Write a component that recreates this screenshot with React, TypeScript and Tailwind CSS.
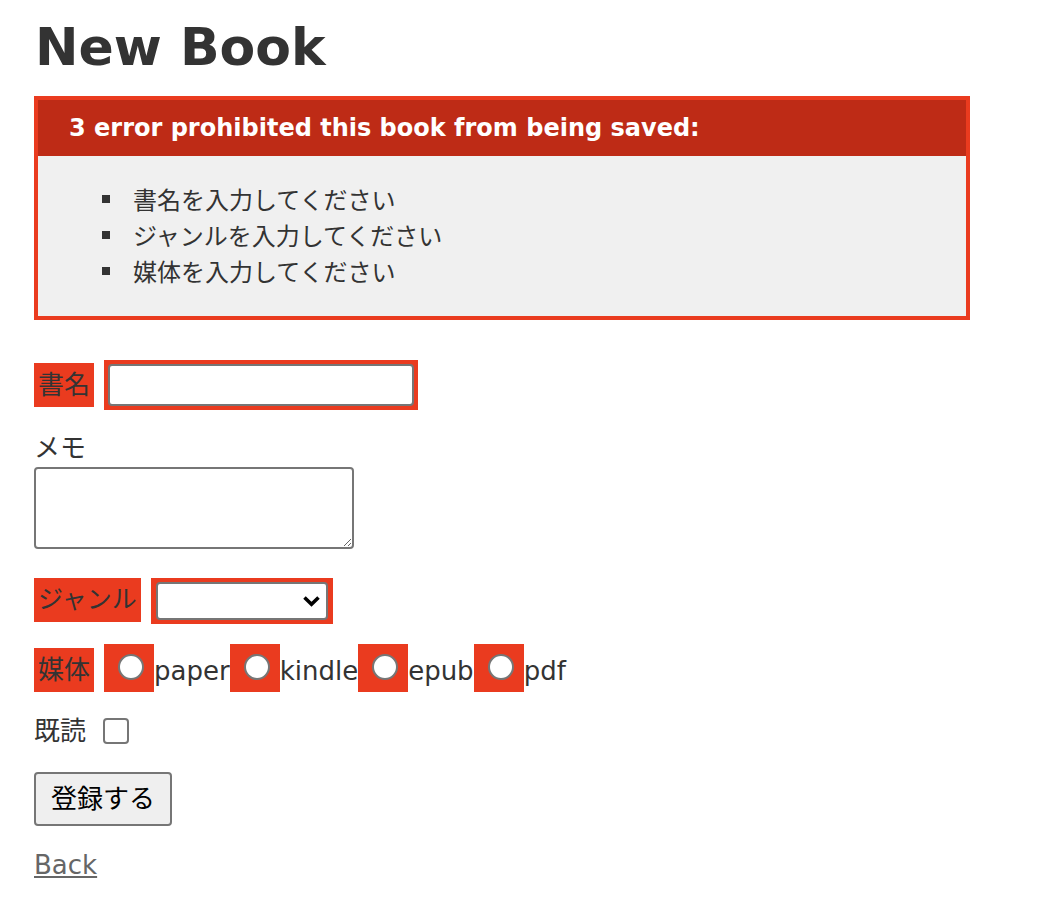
import React from "react";

const media = ["paper", "kindle", "epub", "pdf"];
const errors = [
  "書名を入力してください",
  "ジャンルを入力してください",
  "媒体を入力してください",
];

function ErrorLabel({ children, size = "text-[26px]" }: { children: React.ReactNode; size?: string }) {
  return (
    <span className={`bg-[#ea3b1f] px-[4px] py-[4px] leading-[36px] ${size}`}>
      {children}
    </span>
  );
}

export default function App() {
  return (
    <div className="min-h-screen bg-white px-[34px] pt-[21px] text-[#333] font-['DejaVu_Sans','Noto_Sans_CJK_JP',sans-serif]">
      <h1 className="ml-[1px] text-[52px] leading-[52px] font-bold">New Book</h1>

      {/* Error explanation */}
      <div className="mt-[23px] w-[936px] border-4 border-[#ea3b1f] bg-[#f0f0f0]">
        <h2 className="flex h-[56px] items-center bg-[#be2b16] pl-[31px] text-[24px] font-bold text-white">
          3 error prohibited this book from being saved:
        </h2>
        <ul className="pt-[25px] pb-[27px] pl-[64px] font-['Noto_Sans_CJK_JP',sans-serif] text-[24px] leading-[36px]">
          {errors.map((e) => (
            <li key={e} className="flex items-center">
              <span className="mr-[23px] h-[8px] w-[8px] bg-[#333]" />
              {e}
            </li>
          ))}
        </ul>
      </div>

      {/* Form */}
      <form className="mt-[40px]" onSubmit={(e) => e.preventDefault()}>
        <div className="flex items-center gap-[10px]">
          <ErrorLabel>書名</ErrorLabel>
          <div className="bg-[#ea3b1f] p-[4px]">
            <input
              type="text"
              className="block h-[42px] w-[306px] rounded-[4px] border-2 border-[#767676] bg-white"
            />
          </div>
        </div>

        <div className="mt-[20px] text-[26px] leading-[36px]">メモ</div>
        <textarea className="mt-[1px] block h-[82px] w-[320px] rounded-[4px] border-2 border-[#767676] bg-white" />

        <div className="mt-[29px] flex items-start gap-[10px]">
          <ErrorLabel size="text-[25px]">ジャンル</ErrorLabel>
          <div className="bg-[#ea3b1f] py-[4px] pl-[5px] pr-[5px]">
            <div className="relative">
              <select className="block h-[38px] w-[172px] appearance-none rounded-[4px] border-2 border-[#767676] bg-white">
                <option value=""></option>
              </select>
              <svg
                className="pointer-events-none absolute right-[7px] top-[13px]"
                width="19"
                height="12"
                viewBox="0 0 19 12"
              >
                <path d="M2.5 2.5 L9.5 9.2 L16.5 2.5" fill="none" stroke="#000" strokeWidth="3.6" />
              </svg>
            </div>
          </div>
        </div>

        <div className="mt-[20px] flex items-end">
          <ErrorLabel>媒体</ErrorLabel>
          <div className="ml-[10px] flex items-end">
            {media.map((m) => (
              <React.Fragment key={m}>
                <span className="bg-[#ea3b1f] pt-[10px] pb-[12px] pl-[14px] pr-[10px]">
                  <input
                    type="radio"
                    name="media"
                    className="block h-[26px] w-[26px] appearance-none rounded-full border-2 border-[#767676] bg-white"
                  />
                </span>
                <span className="mb-[3px] text-[26px] leading-[36px]">{m}</span>
              </React.Fragment>
            ))}
          </div>
        </div>

        <div className="mt-[21px] flex h-[36px] items-center">
          <span className="text-[26px] leading-[36px]">既読</span>
          <input
            type="checkbox"
            className="ml-[17px] block h-[26px] w-[26px] appearance-none rounded-[4px] border-2 border-[#767676] bg-white"
          />
        </div>

        <button
          type="submit"
          className="mt-[23px] block h-[54px] w-[138px] rounded-[4px] border-2 border-[#767676] bg-[#efefef] text-[26px] leading-[36px] text-black"
        >
          登録する
        </button>
      </form>

      <a href="#" className="mt-[21px] inline-block text-[26px] leading-[36px] text-[#666] underline">
        Back
      </a>
    </div>
  );
}
